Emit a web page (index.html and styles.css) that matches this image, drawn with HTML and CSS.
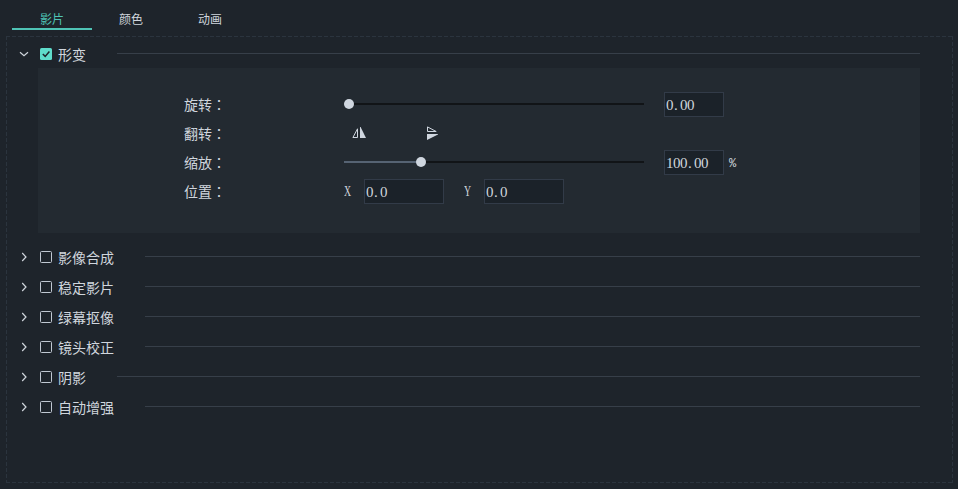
FILE: index.html
```html
<!DOCTYPE html>
<html lang="zh-CN">
<head>
    <meta charset="UTF-8">
    <meta name="viewport" content="width=device-width, initial-scale=1.0">
    <title>影片</title>
    <link rel="stylesheet" href="styles.css">
</head>
<body>
    <div class="tabs">
        <div class="tab active">影片</div>
        <div class="tab">颜色</div>
        <div class="tab last">动画</div>
    </div>
    <div class="content">
        <div class="section open">
            <svg class="arrow" viewBox="0 0 12 12"><path d="M2 4.2 L6 7.7 L10 4.2"/></svg>
            <svg class="check" viewBox="0 0 12 12"><rect width="12" height="12" rx="1.5"/><path d="M2.8 6 L5.2 8.4 L9.4 3.6"/></svg>
            <span class="title">形变</span>
            <div class="line"></div>
        </div>
        <div class="panel">
            <div class="row">
                <span class="label">旋转<b lang="zh-TW">：</b></span>
                <div class="slider"><div class="fill" style="width:5px"></div><div class="knob"></div><div class="rest"></div></div>
                <div class="field">0<i>.</i>00</div>
            </div>
            <div class="row">
                <span class="label">翻转<b lang="zh-TW">：</b></span>
                <svg class="flip" viewBox="0 0 14 14"><path class="outline" d="M5.5 2.8 V11.5 H0.9 Z"/><path class="solid" d="M8 1 H8.6 L14 12 H8 Z"/></svg>
                <svg class="flip flip-v" viewBox="0 0 14 14"><path class="outline" d="M2.5 0.9 V5.5 H11.2 Z"/><path class="solid" d="M2 8 H13 V8.6 L2 14 Z"/></svg>
            </div>
            <div class="row">
                <span class="label">缩放<b lang="zh-TW">：</b></span>
                <div class="slider"><div class="fill" style="width:77px"></div><div class="knob"></div><div class="rest"></div></div>
                <div class="field">100<i>.</i>00</div>
                <span class="unit">%</span>
            </div>
            <div class="row">
                <span class="label">位置<b lang="zh-TW">：</b></span>
                <span class="axis"><span>X</span></span>
                <div class="field wide">0<i>.</i>0</div>
                <span class="axis"><span>Y</span></span>
                <div class="field wide">0<i>.</i>0</div>
            </div>
        </div>
        <div class="section">
            <svg class="arrow" viewBox="0 0 12 12"><path d="M4.2 2 L8 6 L4.2 10"/></svg>
            <div class="box"></div>
            <span class="title">影像合成</span>
            <div class="line"></div>
        </div>
        <div class="section">
            <svg class="arrow" viewBox="0 0 12 12"><path d="M4.2 2 L8 6 L4.2 10"/></svg>
            <div class="box"></div>
            <span class="title">稳定影片</span>
            <div class="line"></div>
        </div>
        <div class="section">
            <svg class="arrow" viewBox="0 0 12 12"><path d="M4.2 2 L8 6 L4.2 10"/></svg>
            <div class="box"></div>
            <span class="title">绿幕抠像</span>
            <div class="line"></div>
        </div>
        <div class="section">
            <svg class="arrow" viewBox="0 0 12 12"><path d="M4.2 2 L8 6 L4.2 10"/></svg>
            <div class="box"></div>
            <span class="title">镜头校正</span>
            <div class="line"></div>
        </div>
        <div class="section">
            <svg class="arrow" viewBox="0 0 12 12"><path d="M4.2 2 L8 6 L4.2 10"/></svg>
            <div class="box"></div>
            <span class="title">阴影</span>
            <div class="line"></div>
        </div>
        <div class="section">
            <svg class="arrow" viewBox="0 0 12 12"><path d="M4.2 2 L8 6 L4.2 10"/></svg>
            <div class="box"></div>
            <span class="title">自动增强</span>
            <div class="line"></div>
        </div>
    </div>
</body>
</html>
```
FILE: styles.css
```css
*{
    box-sizing: border-box;
}
body{
    margin: 0;
    height: 489px;
    overflow: hidden;
    background-color: #1e242b;
    color: #d0d6dd;
    font-family: "Noto Sans CJK SC", sans-serif;
    font-size: 14px;
}
svg{
    display: block;
    flex: none;
}
.tabs{
    display: flex;
    height: 36px;
    padding-left: 12px;
}
.tab{
    width: 80px;
    height: 30px;
    padding-top: 10px;
    padding-right: 2px;
    line-height: 18px;
    font-size: 12px;
    text-align: center;
}
.tab.active{
    color: #4fc3b5;
    border-bottom: 2px solid #4fc3b5;
    padding-right: 0;
}
.tab.last{
    padding-right: 4px;
}
/* dashed frame, 4px dash and 2px gap */
.content{
    width: 947px;
    height: 447px;
    margin-left: 6px;
    padding: 2px 33px 0 12px;
    background:
        repeating-linear-gradient(90deg, #2b343e 0 4px, transparent 4px 6px) top / 100% 1px no-repeat,
        repeating-linear-gradient(90deg, #2b343e 0 4px, transparent 4px 6px) bottom / 100% 1px no-repeat,
        repeating-linear-gradient(#2b343e 0 4px, transparent 4px 6px) left / 1px 100% no-repeat,
        repeating-linear-gradient(#2b343e 0 4px, transparent 4px 6px) right / 1px 100% no-repeat;
}
.section{
    display: flex;
    align-items: center;
    height: 30px;
}
.section.open{
    padding-top: 2px;
}
.arrow{
    width: 12px;
    height: 12px;
    margin-right: 10px;
    fill: none;
    stroke: #d0d6dd;
    stroke-width: 1.2;
}
.check{
    width: 12px;
    height: 12px;
}
.check rect{
    fill: #5fdccb;
}
.check path{
    fill: none;
    stroke: #1e242b;
    stroke-width: 1.5;
}
.box{
    width: 12px;
    height: 12px;
    border: 1px solid #c0c8d2;
    border-radius: 1.5px;
}
.title{
    margin-left: 6px;
    margin-right: 31px;
    line-height: 20px;
}
.line{
    flex: 1;
    height: 1px;
    margin-top: -1px;
    background-color: #373f49;
}
.panel{
    height: 165px;
    margin-left: 20px;
    margin-bottom: 9px;
    padding: 22px 0 0 146px;
    background-color: #232a31;
}
.row{
    display: flex;
    align-items: center;
    height: 29px;
}
.label{
    width: 160px;
    line-height: 20px;
    margin-top: -2px;
}
.label b{
    font-family: "Noto Sans CJK TC", sans-serif;
    font-weight: normal;
}
.slider{
    display: flex;
    align-items: center;
    width: 300px;
    margin-right: 20px;
    margin-top: -1px;
}
.fill{
    height: 2px;
    background-color: #566373;
}
.knob{
    width: 10px;
    height: 10px;
    margin: 0 -5px;
    border-radius: 50%;
    background-color: #cfd6df;
    z-index: 1;
}
.rest{
    flex: 1;
    height: 2px;
    background-color: #111417;
}
.field{
    width: 60px;
    height: 25px;
    padding-left: 1px;
    border: 1px solid #323b48;
    background-color: #1b2229;
    font: 15px/24px "Liberation Serif", serif;
    letter-spacing: -0.5px;
}
.field.wide{
    width: 80px;
    margin-right: 20px;
}
.field i{
    display: inline-block;
    width: 7px;
    padding-left: 1px;
    font-style: normal;
}
.unit{
    margin-left: 5px;
    padding-top: 2px;
    font: 12px "Liberation Mono", monospace;
}
.axis{
    width: 20px;
    padding-top: 1px;
    font: 14px/16px "Liberation Serif", serif;
}
.axis span{
    display: inline-block;
    transform: scaleX(0.7);
    transform-origin: left;
}
.flip{
    width: 14px;
    height: 14px;
    margin-left: 8px;
    margin-top: -2px;
}
.flip-v{
    margin-left: 59px;
}
.outline{
    fill: none;
    stroke: #cfd6df;
}
.solid{
    fill: #cfd6df;
}
```
